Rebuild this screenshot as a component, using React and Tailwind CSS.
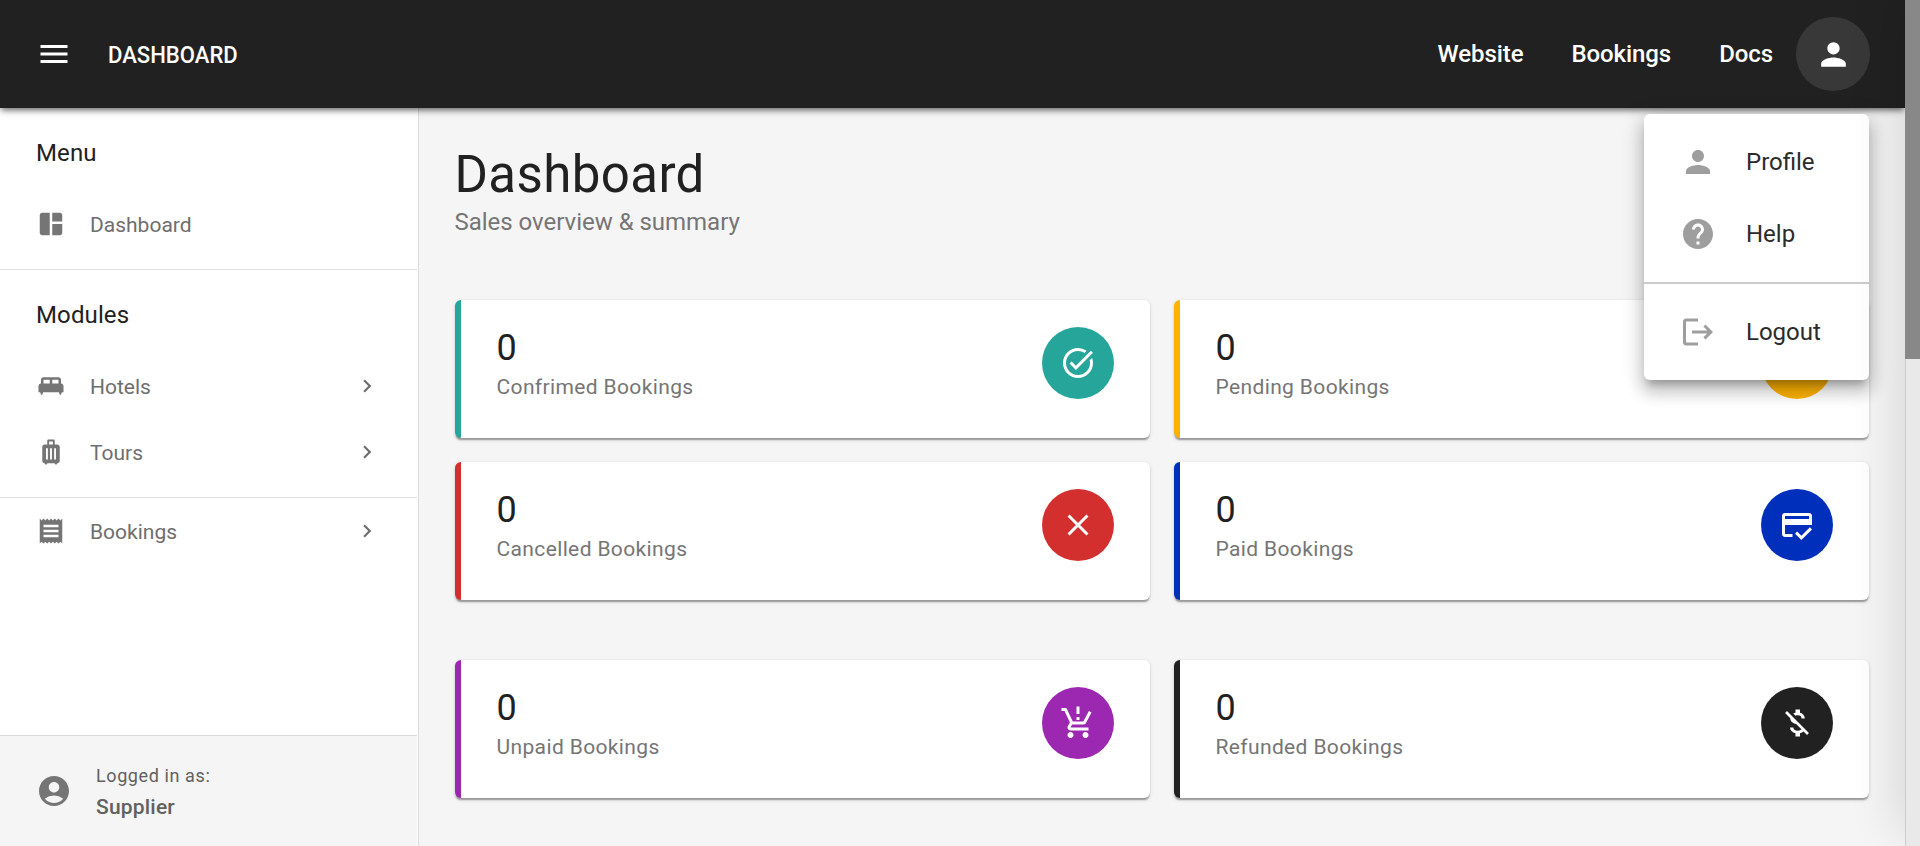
import React from "react";
import {
  MdAccountCircle,
  MdChevronRight,
  MdClose,
  MdCreditScore,
  MdHelp,
  MdKingBed,
  MdLuggage,
  MdMenu,
  MdMoneyOff,
  MdPerson,
  MdProductionQuantityLimits,
  MdReceipt,
  MdSchedule,
  MdSpaceDashboard,
  MdTaskAlt,
} from "react-icons/md";

function LogoutIcon({ className }) {
  return (
    <svg viewBox="0 0 24 24" fill="currentColor" className={className}>
      <path d="m17 7-1.41 1.41L18.17 11H8v2h10.17l-2.58 2.58L17 17l5-5zM4 5h8V3H4c-1.1 0-2 .9-2 2v14c0 1.1.9 2 2 2h8v-2H4V5z" />
    </svg>
  );
}

function Header() {
  return (
    <header className="relative z-10 flex h-[108px] shrink-0 items-center bg-[#212121] pr-[35px] pl-9 text-white shadow-[0_3px_6px_-1px_rgba(0,0,0,0.55),0_2px_10px_rgba(0,0,0,0.12)]">
      <MdMenu className="size-9" />
      <span className="ml-9 origin-left scale-x-92 pt-0.5 text-2xl font-medium">DASHBOARD</span>
      <nav className="ml-auto flex gap-12 pr-[23px] text-2xl font-medium tracking-[-0.08px]">
        <a>Website</a>
        <a>Bookings</a>
        <a>Docs</a>
      </nav>
      <button className="grid size-[74px] place-items-center rounded-full bg-[#383838]">
        <MdPerson className="size-[37px]" />
      </button>
    </header>
  );
}

function NavItem({ icon: Icon, label, expandable }) {
  return (
    <a className="flex h-[66px] items-center pr-[37px] pl-9 text-[21px] text-[#6e6e6e]">
      <Icon className="mr-6 size-[30px] text-[#757575]" />
      <span className="pt-[3px]">{label}</span>
      {expandable && <MdChevronRight className="ml-auto size-[26px]" />}
    </a>
  );
}

function SectionTitle({ children }) {
  return (
    <h2 className="mt-3 mb-[5px] flex h-[66px] items-center pl-9 text-2xl tracking-[0.12px] text-[#212121]">{children}</h2>
  );
}

function Sidebar() {
  return (
    <aside className="flex w-[419px] shrink-0 flex-col border-r border-[#dcdcdc] bg-white pr-px">
      <section className="h-[162px] border-b border-[#dfdfdf]">
        <SectionTitle>Menu</SectionTitle>
        <NavItem icon={MdSpaceDashboard} label="Dashboard" />
      </section>
      <section className="h-[228px] border-b border-[#dfdfdf]">
        <SectionTitle>Modules</SectionTitle>
        <NavItem icon={MdKingBed} label="Hotels" expandable />
        <NavItem icon={MdLuggage} label="Tours" expandable />
      </section>
      <NavItem icon={MdReceipt} label="Bookings" expandable />
      <footer className="mt-auto flex h-[111px] items-center gap-6 border-t border-[#dcdcdc] bg-[#f5f5f5] pl-9 text-[#616161]">
        <MdAccountCircle className="size-9 text-[#757575]" />
        <div className="pt-0.5">
          <p className="text-lg leading-[30px] tracking-[0.6px]">Logged in as:</p>
          <p className="text-[21px] leading-[33px] font-medium tracking-[0.2px]">Supplier</p>
        </div>
      </footer>
    </aside>
  );
}

function StatCard({ label, icon: Icon, border, circle }) {
  return (
    <article
      className={`flex h-[138px] items-start justify-between rounded-md border-l-[6px] bg-white pt-[27px] pr-9 pl-[35.5px] shadow-[0_3px_1.5px_-1.5px_rgba(0,0,0,0.2),0_1.5px_1.5px_rgba(0,0,0,0.14),0_1.5px_4.5px_rgba(0,0,0,0.12)] ${border}`}
    >
      <div className="pt-px">
        <p className="text-4xl leading-10 text-[#212121]">0</p>
        <p className="text-[21px] leading-[38px] tracking-[0.37px] text-[#757575]">{label}</p>
      </div>
      <span className={`grid size-[72px] place-items-center rounded-full text-white ${circle}`}>
        <Icon className="size-9" />
      </span>
    </article>
  );
}

function AccountMenu() {
  return (
    <div className="absolute top-[114px] left-[1644px] z-20 w-[225px] rounded-md bg-white text-2xl text-[#2b2b2b] shadow-[0_7.5px_7.5px_-4px_rgba(0,0,0,0.22),0_12px_15px_1.5px_rgba(0,0,0,0.14),0_4.5px_21px_3px_rgba(0,0,0,0.14)]">
      <ul className="py-3">
        <li className="flex h-[72px] items-center gap-[30px] pl-9">
          <MdPerson className="size-9 text-[#9e9e9e]" />
          Profile
        </li>
        <li className="flex h-[72px] items-center gap-[30px] pl-9">
          <MdHelp className="size-9 text-[#9e9e9e]" />
          Help
        </li>
      </ul>
      <ul className="border-t-2 border-[#cccccc] py-3">
        <li className="flex h-[72px] items-center gap-[30px] pl-9">
          <LogoutIcon className="size-9 text-[#9e9e9e]" />
          Logout
        </li>
      </ul>
    </div>
  );
}

export default function App() {
  return (
    <div className="flex h-[846px] w-[1920px] overflow-hidden bg-[#f5f5f5] font-['Roboto',sans-serif]">
      <div className="relative flex w-[1905px] shrink-0 flex-col overflow-hidden">
        <Header />
        <div className="flex min-h-0 flex-1">
          <Sidebar />
          <main className="flex-1 pt-[37px] pr-9 pl-9">
            <h1 className="-ml-[0.5px] text-[51px] leading-[60px] tracking-[0.4px] text-[#212121]">Dashboard</h1>
            <p className="-mt-px -ml-[0.5px] text-2xl leading-9 tracking-[-0.02px] text-[#757575]">Sales overview &amp; summary</p>
            <div className="mt-[60px] grid grid-cols-2 gap-6">
              <StatCard label="Confrimed Bookings" icon={MdTaskAlt} border="border-[#26a69a]" circle="bg-[#26a69a]" />
              <StatCard label="Pending Bookings" icon={MdSchedule} border="border-[#ffb300]" circle="bg-[#ffb300]" />
              <StatCard label="Cancelled Bookings" icon={MdClose} border="border-[#d32f2f]" circle="bg-[#d32f2f]" />
              <StatCard label="Paid Bookings" icon={MdCreditScore} border="border-[#002fbc]" circle="bg-[#002fbc]" />
            </div>
            <div className="mt-[60px] grid grid-cols-2 gap-6">
              <StatCard label="Unpaid Bookings" icon={MdProductionQuantityLimits} border="border-[#9c27b0]" circle="bg-[#9c27b0]" />
              <StatCard label="Refunded Bookings" icon={MdMoneyOff} border="border-[#212121]" circle="bg-[#212121]" />
            </div>
          </main>
        </div>
        <AccountMenu />
        <div className="pointer-events-none absolute top-0 left-full z-30 h-[825px] w-96 shadow-[0_0_45px_8px_rgba(0,0,0,0.12)]" />
      </div>
      <div className="w-[15px] border-l border-[#cccccc] bg-[#e9e9e9]">
        <div className="-ml-px h-[359px] bg-[#888888]" />
      </div>
    </div>
  );
}
